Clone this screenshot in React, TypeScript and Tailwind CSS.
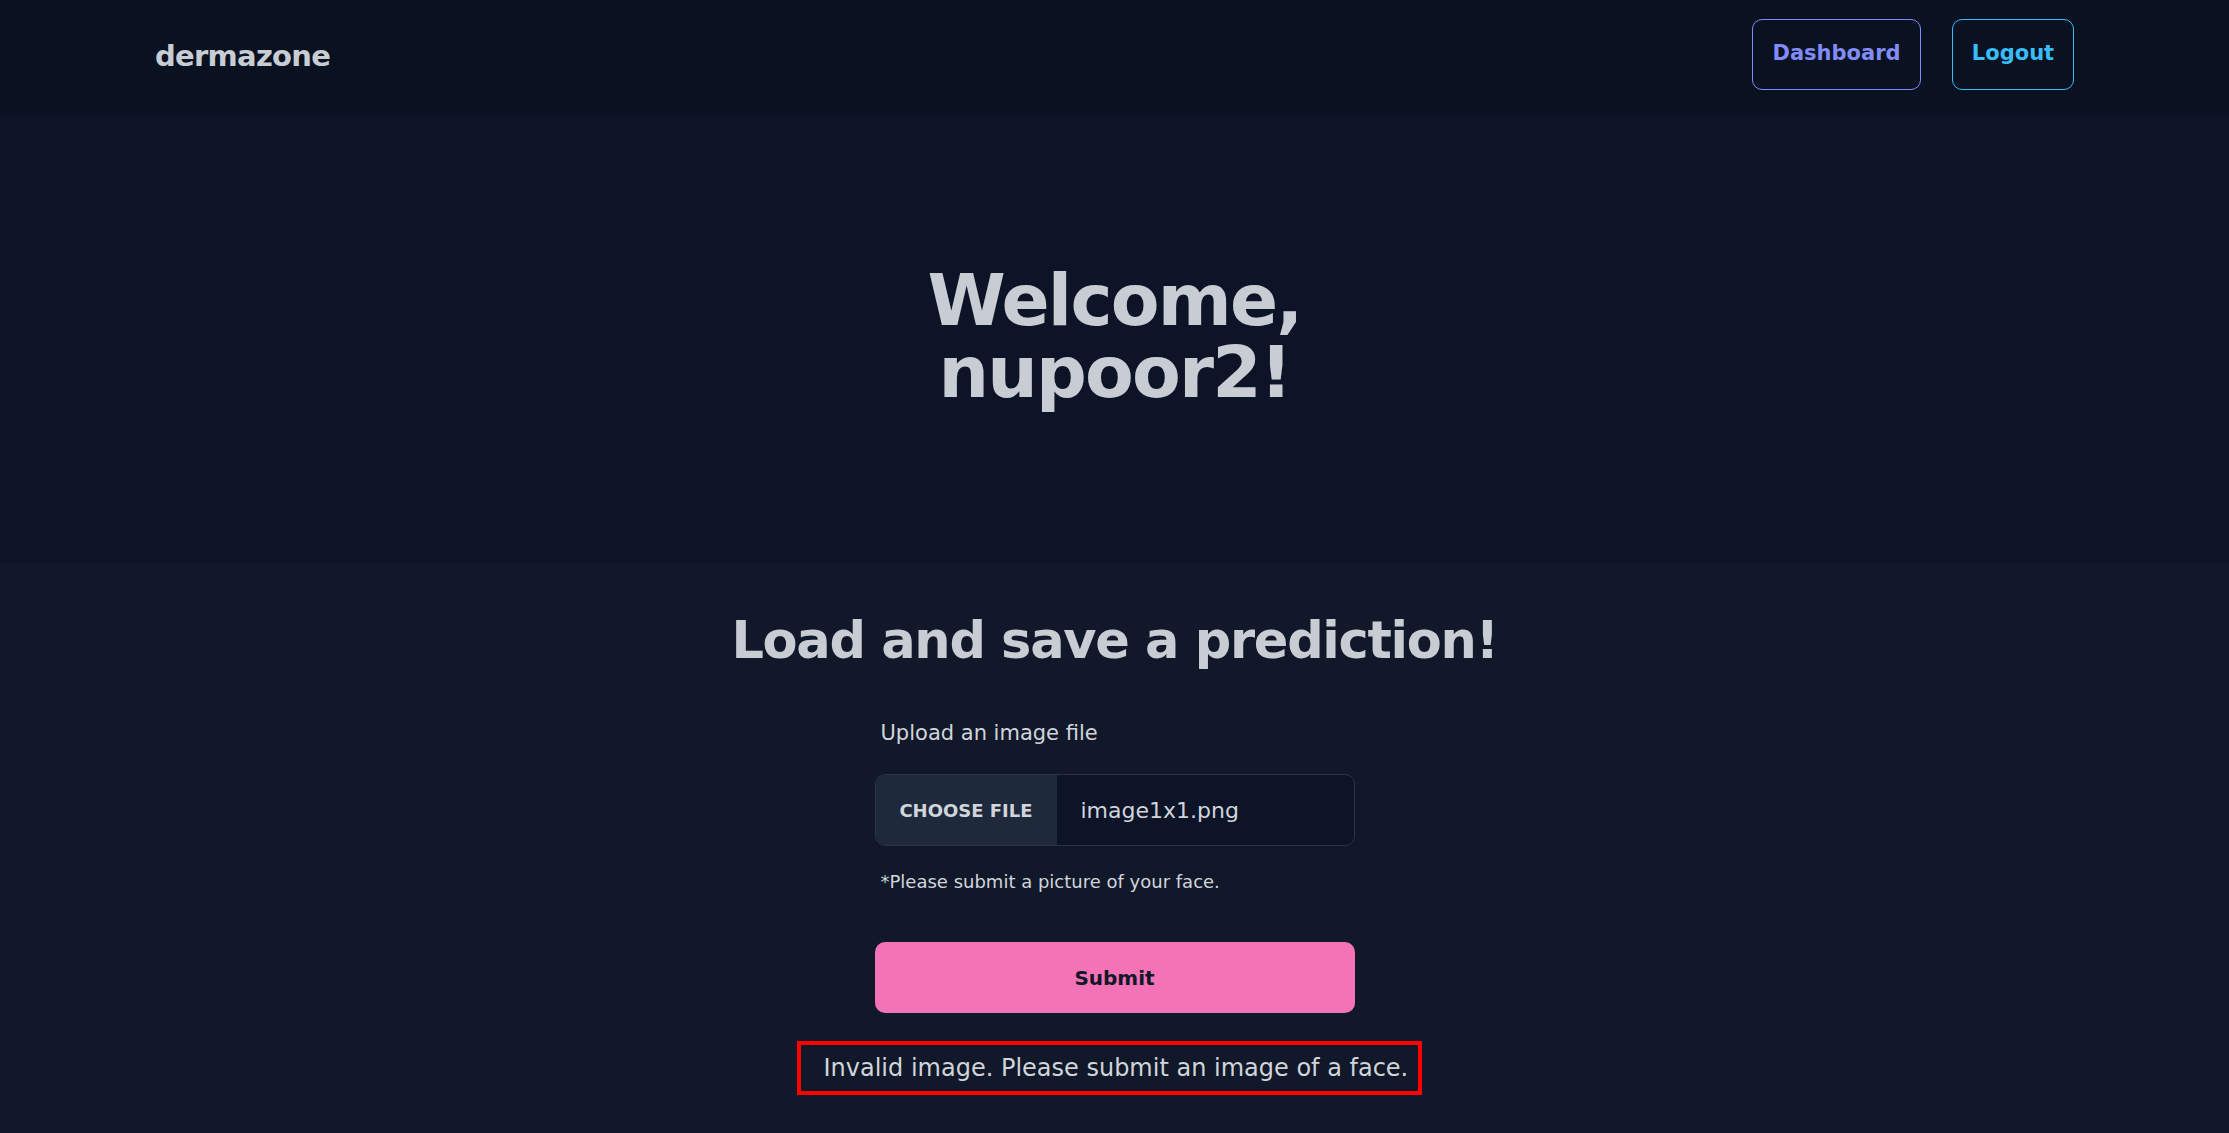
import React from 'react';

const font = { fontFamily: '"DejaVu Sans", "Noto Sans", sans-serif' };

export default function App() {
  return (
    <div className="min-h-screen w-full bg-[#101829] text-[#c8ccd3]" style={font}>
      {/* Navbar */}
      <nav className="h-[113px] bg-[#0a1120] flex items-center justify-between px-[155px]">
        <span className="text-[29px] font-bold text-[#c8ccd3] tracking-tight">dermazone</span>
        <div className="flex items-center gap-[31px] -mt-[5px]">
          <button className="h-[71px] w-[169px] rounded-[10px] border border-[#818cf8] text-[#818cf8] text-[21px] font-bold">
            Dashboard
          </button>
          <button className="h-[71px] w-[122px] rounded-[10px] border border-[#38bdf8] text-[#38bdf8] text-[21px] font-bold">
            Logout
          </button>
        </div>
      </nav>

      {/* Hero */}
      <section className="h-[450px] bg-[#0e1428] flex items-center justify-center">
        <h1 className="text-[71px] leading-[72px] font-bold text-center tracking-tight -mt-[2px]">
          Welcome,
          <br />
          nupoor2!
        </h1>
      </section>

      {/* Prediction form */}
      <section className="flex flex-col items-center pt-[46px] pb-[38px]">
        <h2 className="text-[51px] leading-[64px] font-bold tracking-tight">Load and save a prediction!</h2>

        <div className="w-[480px] mt-[48px] flex flex-col">
          <label className="pl-[6px] text-[21px] leading-[24px] text-[#d1d5db]">Upload an image file</label>

          <div className="mt-[29px] h-[72px] flex rounded-[10px] border border-[#2b3445] overflow-hidden bg-[#0e1428]">
            <div className="w-[181px] shrink-0 bg-[#1e293b] flex items-center justify-center text-[18px] font-bold text-[#d1d5db] uppercase">
              Choose file
            </div>
            <div className="flex items-center pl-[24px] text-[22px] text-[#d1d5db]">image1x1.png</div>
          </div>

          <p className="pl-[6px] mt-[26px] text-[18px] leading-[20px] text-[#d1d5db]">*Please submit a picture of your face.</p>

          <button className="mt-[50px] h-[71px] w-full rounded-[10px] bg-[#f472b6] text-[#111827] text-[20px] font-bold">
            Submit
          </button>
        </div>

        <div className="mt-[28px] mr-[11px] h-[54px] w-[625px] border-[4px] border-[#ff0000] flex items-center pl-[23px] pr-[11px]">
          <span className="text-[24px] text-[#d1d5db] whitespace-nowrap">Invalid image. Please submit an image of a face.</span>
        </div>
      </section>
    </div>
  );
}
